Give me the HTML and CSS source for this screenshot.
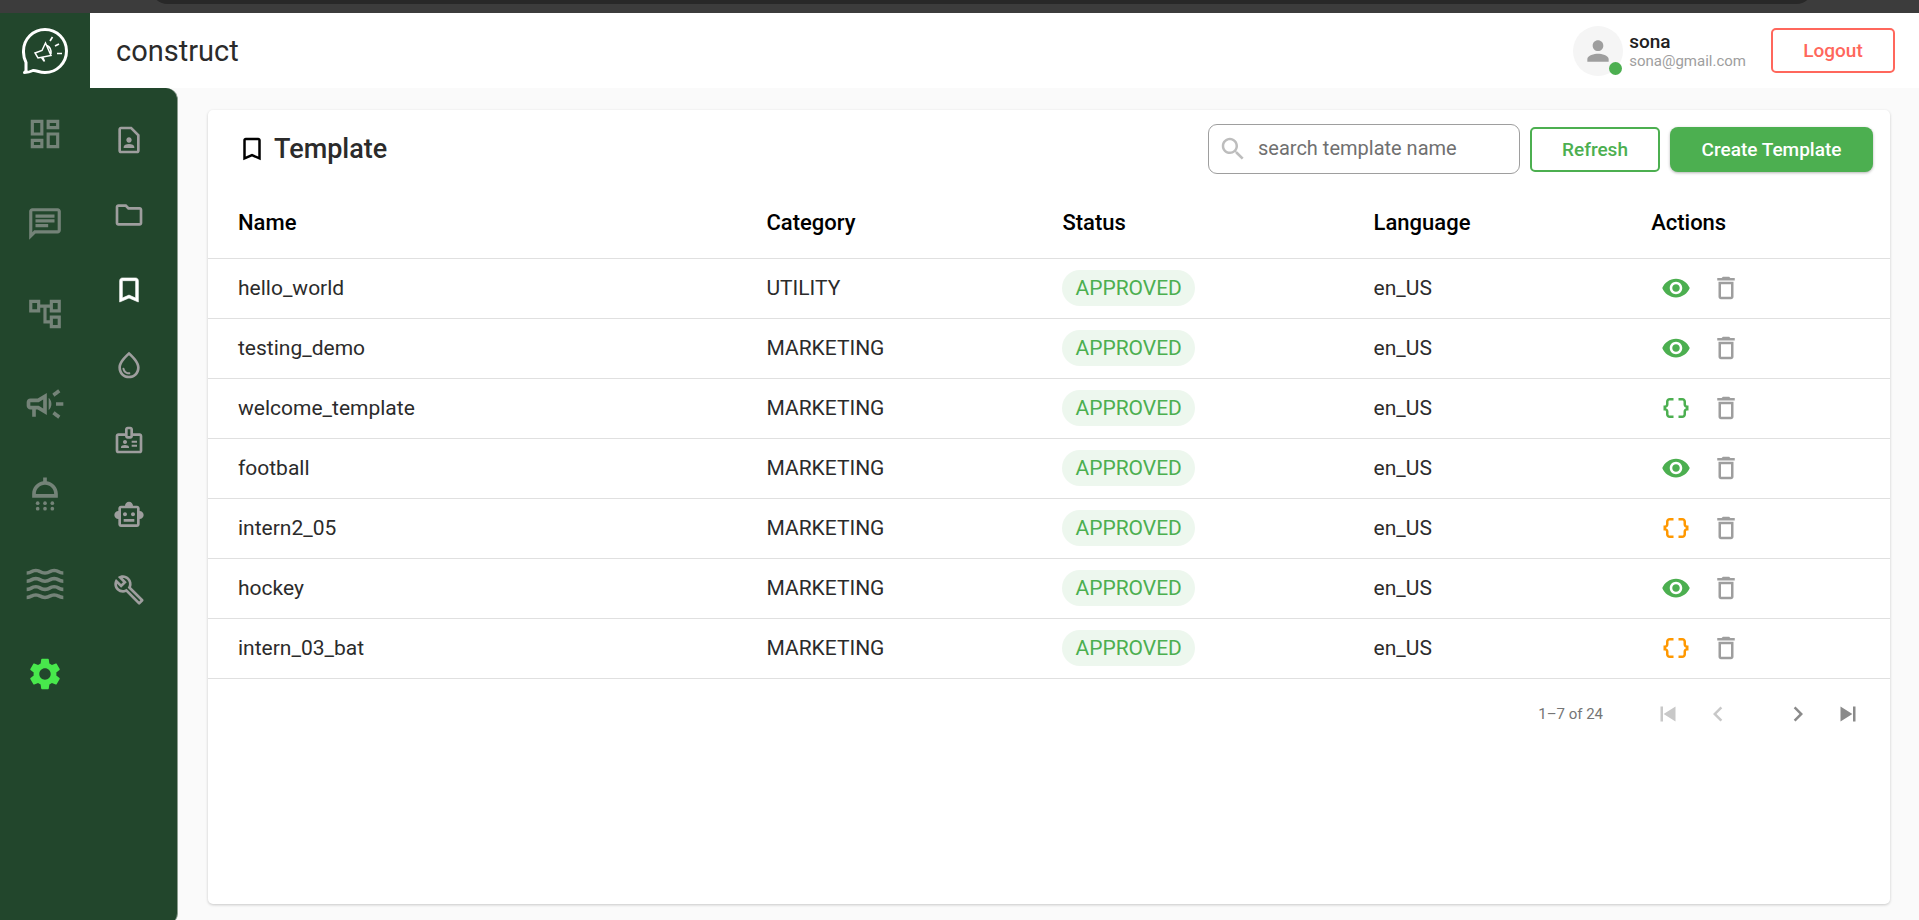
FILE: index.html
```
<!DOCTYPE html>
<html lang="en">
<head>
<meta charset="utf-8">
<title>construct - Template</title>
<link rel="stylesheet" href="styles.css">
</head>
<body>
<svg class="defs" aria-hidden="true">
  <symbol id="i-dashboard" viewBox="0 0 24 24"><path d="M19 5v2h-4V5h4M9 5v6H5V5h4m10 8v6h-4v-6h4M9 17v2H5v-2h4M21 3h-8v6h8V3zM11 3H3v10h8V3zm10 8h-8v10h8V11zm-10 4H3v6h8v-6z"/></symbol>
  <symbol id="i-chat" viewBox="0 0 24 24"><path d="M4 4h16v12H5.170L4 17.170V4m0-2c-1.100 0-1.990.9-1.990 2L2 22l4-4h14c1.100 0 2-.9 2-2V4c0-1.100-.9-2-2-2H4zm2 10h8v2H6v-2zm0-3h12v2H6V9zm0-3h12v2H6V6z"/></symbol>
  <symbol id="i-tree" viewBox="0 0 24 24"><path d="M22 11V3h-7v3H9V3H2v8h7V8h2v10h4v3h7v-8h-7v3h-2V8h2v3h7zM7 9H4V5h3v4zm10 6h3v4h-3v-4zm0-10h3v4h-3V5z"/></symbol>
  <symbol id="i-campaign" viewBox="0 0 24 24"><path d="M18 11v2h4v-2h-4zm-2 6.610c.96.71 2.210 1.650 3.200 2.390.4-.53.8-1.070 1.200-1.600-.99-.74-2.240-1.680-3.200-2.400-.4.54-.8 1.080-1.200 1.610zM20.400 5.600c-.4-.53-.8-1.070-1.200-1.600-.99.74-2.240 1.680-3.200 2.400.4.53.8 1.070 1.200 1.600.96-.72 2.210-1.650 3.200-2.400zM4 9c-1.100 0-2 .9-2 2v2c0 1.100.9 2 2 2h1v4h2v-4h1l5 3V6L8 9H4zm5.030 1.710L11 9.530v4.940l-1.970-1.180-.48-.29H4v-2h4.550l.48-.29zM15.500 12c0-1.330-.58-2.530-1.500-3.350v6.690c.92-.81 1.500-2.010 1.500-3.340z"/></symbol>
  <symbol id="i-shower" viewBox="0 0 24 24"><circle cx="8" cy="17" r="1"/><circle cx="12" cy="17" r="1"/><circle cx="16" cy="17" r="1"/><path d="M13 5.080V3h-2v2.080C7.610 5.570 5 8.470 5 12v2h14v-2c0-3.530-2.610-6.430-6-6.920zM7 12c0-2.760 2.240-5 5-5s5 2.240 5 5H7z"/><circle cx="8" cy="20" r="1"/><circle cx="12" cy="20" r="1"/><circle cx="16" cy="20" r="1"/></symbol>
  <symbol id="i-waves" viewBox="0 0 24 24"><g id="w"><path d="M17 16.990c-1.350 0-2.200.42-2.950.8-.65.33-1.180.6-2.050.6-.9 0-1.400-.25-2.050-.6-.75-.38-1.570-.8-2.950-.8s-2.200.42-2.950.8c-.65.33-1.170.6-2.050.6v1.950c1.350 0 2.200-.42 2.950-.8.65-.33 1.170-.6 2.050-.6s1.400.25 2.050.6c.75.38 1.570.8 2.950.8s2.200-.42 2.950-.8c.65-.33 1.180-.6 2.050-.6.9 0 1.400.25 2.050.6.75.38 1.580.8 2.950.8v-1.950c-.9 0-1.400-.25-2.050-.6-.75-.38-1.600-.8-2.950-.8z"/></g><use href="#w" y="-4.450"/><use href="#w" y="-8.900"/><use href="#w" y="-13.350"/></symbol>
  <symbol id="i-settings" viewBox="0 0 24 24"><path d="M19.140 12.940c.04-.3.06-.61.06-.94 0-.32-.02-.64-.07-.94l2.030-1.580c.18-.14.23-.41.12-.61l-1.920-3.320c-.12-.22-.37-.29-.59-.22l-2.390.96c-.5-.38-1.030-.7-1.620-.94l-.36-2.540c-.04-.24-.24-.41-.48-.41h-3.840c-.24 0-.43.17-.47.41l-.36 2.540c-.59.24-1.130.57-1.620.94l-2.390-.96c-.22-.08-.47 0-.59.22L2.740 8.870c-.12.21-.08.47.12.61l2.030 1.580c-.05.3-.09.63-.09.94s.02.64.07.94l-2.030 1.580c-.18.14-.23.41-.12.61l1.920 3.320c.12.22.37.29.59.22l2.390-.96c.5.38 1.030.7 1.620.94l.36 2.540c.05.24.24.41.48.41h3.840c.24 0 .44-.17.47-.41l.36-2.540c.59-.24 1.130-.56 1.620-.94l2.390.96c.22.08.47 0 .59-.22l1.920-3.320c.12-.22.07-.47-.12-.61l-2.010-1.580zM12 15.600c-1.980 0-3.600-1.620-3.600-3.600s1.620-3.600 3.600-3.600 3.600 1.620 3.600 3.600-1.620 3.600-3.600 3.600z"/></symbol>
  <symbol id="i-contact" viewBox="0 0 24 24"><path d="M13.170 4 18 8.830V20H6V4h7.170M14 2H6c-1.100 0-2 .9-2 2v16c0 1.100.9 2 2 2h12c1.100 0 2-.9 2-2V8l-6-6zm-2 12c1.100 0 2-.9 2-2s-.9-2-2-2-2 .9-2 2 .9 2 2 2zm4 3.430c0-.81-.48-1.530-1.220-1.850-.85-.37-1.790-.58-2.780-.58s-1.930.21-2.780.58C8.480 15.900 8 16.620 8 17.430V18h8v-.57z"/></symbol>
  <symbol id="i-folder" viewBox="0 0 24 24"><path d="m9.170 6 2 2H20v10H4V6h5.170M10 4H4c-1.100 0-1.990.9-1.990 2L2 18c0 1.100.9 2 2 2h16c1.100 0 2-.9 2-2V8c0-1.100-.9-2-2-2h-8l-2-2z"/></symbol>
  <symbol id="i-bookmark" viewBox="0 0 24 24"><path d="M17 3H7c-1.100 0-1.990.9-1.990 2L5 21l7-3 7 3V5c0-1.100-.9-2-2-2zm0 15-5-2.180L7 18V5h10v13z"/></symbol>
  <symbol id="i-drop" viewBox="0 0 24 24"><path d="M12 2c-5.330 4.550-8 8.480-8 11.800 0 4.980 3.800 8.200 8 8.200s8-3.220 8-8.200c0-3.320-2.670-7.250-8-11.800zm0 18c-3.350 0-6-2.570-6-6.200 0-2.340 1.950-5.440 6-9.140 4.050 3.700 6 6.790 6 9.140 0 3.630-2.650 6.200-6 6.200zm-4.170-6c.37 0 .67.26.74.62.41 2.220 2.280 2.980 3.640 2.870.43-.02.79.32.79.75 0 .4-.32.73-.72.75-2.130.13-4.620-1.090-5.190-4.120-.08-.45.28-.87.74-.87z"/></symbol>
  <symbol id="i-badge" viewBox="0 0 24 24"><path d="M20 7h-5V4c0-1.100-.9-2-2-2h-2c-1.100 0-2 .9-2 2v3H4c-1.100 0-2 .9-2 2v11c0 1.100.9 2 2 2h16c1.100 0 2-.9 2-2V9c0-1.100-.9-2-2-2zM11 4h2v5h-2V4zm9 16H4V9h5c0 1.100.9 2 2 2h2c1.100 0 2-.9 2-2h5v11zM9 15c.83 0 1.500-.67 1.500-1.500S9.830 12 9 12s-1.500.67-1.500 1.500S8.170 15 9 15zm2.080 1.180C10.440 15.900 9.740 15.750 9 15.750s-1.440.15-2.080.43c-.56.24-.92.78-.92 1.390V18h6v-.43c0-.61-.36-1.150-.92-1.390zM14 15.500h4V17h-4zM14 12.500h4V14h-4z"/></symbol>
  <symbol id="i-robot" viewBox="0 0 24 24"><path d="M20 9V7c0-1.100-.9-2-2-2h-3c0-1.660-1.340-3-3-3S9 3.340 9 5H6c-1.100 0-2 .9-2 2v2c-1.660 0-3 1.340-3 3s1.340 3 3 3v4c0 1.100.9 2 2 2h12c1.100 0 2-.9 2-2v-4c1.660 0 3-1.340 3-3s-1.340-3-3-3zm-2 10H6V7h12v12zm-9-6c-.83 0-1.500-.67-1.500-1.500S8.170 10 9 10s1.500.67 1.500 1.500S9.830 13 9 13zm7.500-1.500c0 .83-.67 1.500-1.500 1.500s-1.500-.67-1.500-1.500.67-1.500 1.500-1.500 1.500.67 1.500 1.500zM8 15h8v2H8v-2z"/></symbol>
  <symbol id="i-wrench" viewBox="0 0 24 24"><path d="m22.610 18.990-9.080-9.080c.93-2.340.45-5.100-1.440-7C9.790.61 6.210.4 3.660 2.260L7.500 6.110 6.080 7.520 2.250 3.690C.39 6.230.6 9.820 2.900 12.110c1.860 1.860 4.570 2.350 6.890 1.480l9.110 9.110c.39.39 1.020.39 1.410 0l2.300-2.300c.4-.38.4-1.010 0-1.410zm-3 1.600-9.460-9.460c-.61.45-1.290.72-2 .82-1.360.2-2.790-.21-3.830-1.250C3.370 9.760 2.930 8.500 3 7.260l3.090 3.090 4.240-4.240-3.090-3.090c1.240-.07 2.490.37 3.440 1.310 1.080 1.080 1.490 2.570 1.240 3.960-.12.71-.42 1.370-.88 1.960l9.450 9.450-.88.89z"/></symbol>
  <symbol id="i-person" viewBox="0 0 24 24"><path d="M12 12c2.210 0 4-1.790 4-4s-1.790-4-4-4-4 1.790-4 4 1.790 4 4 4zm0 2c-2.670 0-8 1.340-8 4v2h16v-2c0-2.660-5.330-4-8-4z"/></symbol>
  <symbol id="i-search" viewBox="0 0 24 24"><path d="M15.500 14h-.79l-.28-.27C15.410 12.590 16 11.110 16 9.500 16 5.910 13.090 3 9.500 3S3 5.910 3 9.500 5.910 16 9.500 16c1.610 0 3.090-.59 4.230-1.570l.27.28v.79l5 4.990L20.490 19l-4.990-5zm-6 0C7.010 14 5 11.990 5 9.500S7.010 5 9.500 5 14 7.010 14 9.500 11.990 14 9.500 14z"/></symbol>
  <symbol id="i-eye" viewBox="0 0 24 24"><path d="M12 4.500C7 4.500 2.730 7.610 1 12c1.730 4.390 6 7.500 11 7.500s9.270-3.110 11-7.500c-1.730-4.390-6-7.500-11-7.500zM12 17c-2.760 0-5-2.240-5-5s2.240-5 5-5 5 2.240 5 5-2.240 5-5 5zm0-8c-1.660 0-3 1.340-3 3s1.340 3 3 3 3-1.340 3-3-1.340-3-3-3z"/></symbol>
  <symbol id="i-braces" viewBox="0 0 24 24"><path d="M4 7v2c0 .55-.45 1-1 1H2v4h1c.55 0 1 .45 1 1v2c0 1.650 1.350 3 3 3h3v-2H7c-.55 0-1-.45-1-1v-2c0-1.300-.84-2.420-2-2.830v-.34C5.160 11.420 6 10.300 6 9V7c0-.55.45-1 1-1h3V4H7C5.350 4 4 5.350 4 7zM21 10c-.55 0-1-.45-1-1V7c0-1.650-1.350-3-3-3h-3v2h3c.55 0 1 .45 1 1v2c0 1.300.84 2.420 2 2.830v.34c-1.160.41-2 1.520-2 2.830v2c0 .55-.45 1-1 1h-3v2h3c1.650 0 3-1.350 3-3v-2c0-.55.45-1 1-1h1v-4h-1z"/></symbol>
  <symbol id="i-trash" viewBox="0 0 24 24"><path d="M6 19c0 1.100.9 2 2 2h8c1.100 0 2-.9 2-2V7H6v12zM8 9h8v10H8V9zm7.500-5-1-1h-5l-1 1H5v2h14V4h-3.500z"/></symbol>
  <symbol id="i-first" viewBox="0 0 24 24"><path d="M6 6h2v12H6zm2.500 6 9.500 6V6z"/></symbol>
  <symbol id="i-prev" viewBox="0 0 24 24"><path d="M15.410 7.410 14 6l-6 6 6 6 1.410-1.410L10.830 12z"/></symbol>
  <symbol id="i-next" viewBox="0 0 24 24"><path d="M10 6 8.590 7.410 13.170 12l-4.580 4.590L10 18l6-6z"/></symbol>
  <symbol id="i-last" viewBox="0 0 24 24"><path d="m6 18 9.500-6L6 6v12zM16 6v12h2V6h-2z"/></symbol>
</svg>

<div class="browser-bar"><div class="address-pill"></div></div>

<div class="app">
  <nav class="rail" aria-label="Main">
    <a class="logo" href="#" aria-label="Home">
      <svg viewBox="0 0 46 46" fill="none" stroke="#fff">
        <path stroke-width="3" stroke-linejoin="round" d="M2.500 44.500 4 43V34.500C1.500 30 1.400 27 1.500 23A21.500 21.500 0 1 1 23 44.500C17 44.500 14 42 11 42.500 8 44 5 44.500 2.500 44.500Z"/>
        <path stroke-width="1.500" d="m13 25 7-2.500L23.500 15 29 27.500 16 30ZM19.500 29.500 22 33 M25 17.500c3 1.500 4.500 4.500 4 8.500M21 29.500l1.500 4"/>
        <path stroke-width="1.700" d="m28 13 2.500-4M33 18l4-2M35 25.500h5"/>
      </svg>
    </a>
    <a href="#" aria-label="Dashboard"><svg><use href="#i-dashboard"/></svg></a>
    <a href="#" aria-label="Chat"><svg><use href="#i-chat"/></svg></a>
    <a href="#" aria-label="Flows"><svg><use href="#i-tree"/></svg></a>
    <a href="#" aria-label="Campaigns" class="large"><svg><use href="#i-campaign"/></svg></a>
    <a href="#" aria-label="Drip" class="large"><svg><use href="#i-shower"/></svg></a>
    <a href="#" aria-label="Streams" class="large"><svg><use href="#i-waves"/></svg></a>
    <a href="#" aria-label="Settings" class="active"><svg><use href="#i-settings"/></svg></a>
  </nav>

  <div class="main">
    <header class="header">
      <h1>construct</h1>
      <div class="user">
        <div class="avatar"><svg><use href="#i-person"/></svg><span class="online"></span></div>
        <div class="who"><strong>sona</strong><span>sona@gmail.com</span></div>
      </div>
      <button class="btn logout" type="button">Logout</button>
    </header>

    <div class="body">
      <nav class="subnav" aria-label="Settings">
        <a href="#" aria-label="Contacts"><svg><use href="#i-contact"/></svg></a>
        <a href="#" aria-label="Files"><svg><use href="#i-folder"/></svg></a>
        <a href="#" aria-label="Templates" class="active"><svg><use href="#i-bookmark"/></svg></a>
        <a href="#" aria-label="Theme"><svg><use href="#i-drop"/></svg></a>
        <a href="#" aria-label="Profile"><svg><use href="#i-badge"/></svg></a>
        <a href="#" aria-label="Bots"><svg><use href="#i-robot"/></svg></a>
        <a href="#" aria-label="Tools"><svg><use href="#i-wrench"/></svg></a>
      </nav>

      <main class="card">
        <div class="toolbar">
          <h2><svg><use href="#i-bookmark"/></svg>Template</h2>
          <label class="search"><svg><use href="#i-search"/></svg><input type="text" aria-label="Search template name" placeholder="search template name"></label>
          <button class="btn refresh" type="button">Refresh</button>
          <button class="btn create" type="button">Create Template</button>
        </div>
        <table>
          <thead>
            <tr><th class="c-name">Name</th><th class="c-category">Category</th><th class="c-status">Status</th><th class="c-language">Language</th><th>Actions</th></tr>
          </thead>
          <tbody>
            <tr><td>hello_world</td><td>UTILITY</td><td><span class="chip">APPROVED</span></td><td>en_US</td><td><div class="actions"><button class="green" aria-label="View"><svg><use href="#i-eye"/></svg></button><button aria-label="Delete"><svg><use href="#i-trash"/></svg></button></div></td></tr>
            <tr><td>testing_demo</td><td>MARKETING</td><td><span class="chip">APPROVED</span></td><td>en_US</td><td><div class="actions"><button class="green" aria-label="View"><svg><use href="#i-eye"/></svg></button><button aria-label="Delete"><svg><use href="#i-trash"/></svg></button></div></td></tr>
            <tr><td>welcome_template</td><td>MARKETING</td><td><span class="chip">APPROVED</span></td><td>en_US</td><td><div class="actions"><button class="green" aria-label="Variables"><svg><use href="#i-braces"/></svg></button><button aria-label="Delete"><svg><use href="#i-trash"/></svg></button></div></td></tr>
            <tr><td>football</td><td>MARKETING</td><td><span class="chip">APPROVED</span></td><td>en_US</td><td><div class="actions"><button class="green" aria-label="View"><svg><use href="#i-eye"/></svg></button><button aria-label="Delete"><svg><use href="#i-trash"/></svg></button></div></td></tr>
            <tr><td>intern2_05</td><td>MARKETING</td><td><span class="chip">APPROVED</span></td><td>en_US</td><td><div class="actions"><button class="orange" aria-label="Variables"><svg><use href="#i-braces"/></svg></button><button aria-label="Delete"><svg><use href="#i-trash"/></svg></button></div></td></tr>
            <tr><td>hockey</td><td>MARKETING</td><td><span class="chip">APPROVED</span></td><td>en_US</td><td><div class="actions"><button class="green" aria-label="View"><svg><use href="#i-eye"/></svg></button><button aria-label="Delete"><svg><use href="#i-trash"/></svg></button></div></td></tr>
            <tr><td>intern_03_bat</td><td>MARKETING</td><td><span class="chip">APPROVED</span></td><td>en_US</td><td><div class="actions"><button class="orange" aria-label="Variables"><svg><use href="#i-braces"/></svg></button><button aria-label="Delete"><svg><use href="#i-trash"/></svg></button></div></td></tr>
          </tbody>
        </table>
        <div class="pager">
          <span class="range">1–7 of 24</span>
          <button aria-label="First page" disabled><svg><use href="#i-first"/></svg></button>
          <button aria-label="Previous page" disabled><svg><use href="#i-prev"/></svg></button>
          <button class="next" aria-label="Next page"><svg><use href="#i-next"/></svg></button>
          <button aria-label="Last page"><svg><use href="#i-last"/></svg></button>
        </div>
      </main>
    </div>
  </div>
</div>
</body>
</html>
```

FILE: styles.css
```
* { box-sizing: border-box; }

body {
  margin: 0;
  height: 100vh;
  display: flex;
  flex-direction: column;
  overflow: hidden;
  background: #fafafa;
  color: #2b2b2b;
  font-family: Roboto, "Liberation Sans", sans-serif;
}

h1, h2 { margin: 0; }
svg { display: block; fill: currentColor; flex: none; }
.defs { position: absolute; width: 0; height: 0; }
button { font-family: inherit; cursor: pointer; }

/* Browser strip above the app */
.browser-bar {
  flex: none;
  display: flex;
  align-items: flex-end;
  height: 13px;
  padding: 0 105px 9px 150px;
  overflow: hidden;
  background: #3c3c3c;
}
.address-pill {
  flex: 1;
  height: 36px;
  border-radius: 18px;
  background: #282828;
}

.app { flex: 1; display: flex; min-height: 0; }

/* Icon rail */
.rail {
  flex: none;
  width: 90px;
  display: flex;
  flex-direction: column;
  background: #22462c;
}
.rail a {
  display: flex;
  align-items: center;
  justify-content: center;
  height: 90px;
  color: #748378;
}
.rail svg { width: 38px; height: 38px; }
.rail .large svg { width: 44px; height: 44px; }
.rail .active { color: #48e84c; }
.rail .logo { height: 76px; }
.rail .logo svg { width: 46px; height: 46px; fill: none; }

.main { flex: 1; min-width: 0; display: flex; flex-direction: column; }

/* Header */
.header {
  flex: none;
  display: flex;
  align-items: center;
  height: 75px;
  padding: 0 24px 0 26px;
  background: #fff;
}
.header h1 { flex: 1; font-size: 29px; font-weight: 400; line-height: 36px; }
.user { display: flex; align-items: center; gap: 6px; margin-right: 25px; }
.avatar {
  position: relative;
  display: flex;
  align-items: center;
  justify-content: center;
  width: 50px;
  height: 50px;
  border-radius: 50%;
  background: #f5f5f5;
  color: #9e9e9e;
}
.avatar svg { width: 32px; height: 32px; }
.online {
  position: absolute;
  right: 1px;
  bottom: 1px;
  width: 13px;
  height: 13px;
  border-radius: 50%;
  background: #4caf50;
}
.who { display: flex; flex-direction: column; }
.who strong { font-size: 19px; font-weight: 500; line-height: 20px; color: #212121; }
.who span { font-size: 15px; line-height: 18px; color: #9e9e9e; }

.btn {
  height: 45px;
  padding: 0;
  border: 2px solid;
  border-radius: 5px;
  background: #fff;
  font-size: 19px;
  font-weight: 500;
}
.logout { width: 124px; color: #ff675c; }
.refresh { width: 130px; color: #4caf50; }
.create {
  width: 203px;
  border: 0;
  border-radius: 8px;
  background: #4caf50;
  color: #fff;
  box-shadow: 0 1px 3px rgba(0, 0, 0, .3);
}

/* Page body */
.body { flex: 1; display: flex; min-height: 0; }
.subnav {
  flex: none;
  width: 88px;
  margin-bottom: -5px;
  padding: 14px 10px 0 0;
  border-right: 1px solid #8b9c8f;
  border-radius: 0 12px 12px 0;
  background: #22462c;
}
.subnav a {
  display: flex;
  align-items: center;
  justify-content: center;
  height: 75px;
  color: #9e9e9e;
}
.subnav svg { width: 32px; height: 32px; }
.subnav .active { color: #fff; }
.subnav .active svg { stroke: currentColor; stroke-width: .5px; }

.card {
  flex: 1;
  min-width: 0;
  margin: 22px 29px 16px 30px;
  border-radius: 5px;
  background: #fff;
  box-shadow: 0 1px 3px rgba(0, 0, 0, .2);
}
.toolbar {
  display: flex;
  align-items: center;
  gap: 10px;
  height: 78px;
  padding: 0 17px 0 29px;
}
.toolbar h2 {
  flex: 1;
  display: flex;
  align-items: center;
  gap: 7px;
  font-size: 27px;
  font-weight: 500;
}
.toolbar h2 svg { width: 30px; height: 30px; color: #000; }
.search {
  display: flex;
  align-items: center;
  gap: 10px;
  width: 312px;
  height: 50px;
  padding: 0 9px;
  border: 1px solid #9e9e9e;
  border-radius: 9px;
}
.search svg { width: 30px; height: 30px; color: #bdbdbd; }
.search input {
  flex: 1;
  min-width: 0;
  padding: 0 0 2px;
  border: 0;
  outline: 0;
  background: none;
  font: 400 20px/24px Roboto, "Liberation Sans", sans-serif;
}
.search input::placeholder { color: #707070; opacity: 1; }

/* Template table */
table { width: 100%; table-layout: fixed; border-collapse: collapse; }
th, td { padding: 0; border-bottom: 1px solid #e0e0e0; text-align: left; }
th { height: 70px; font-size: 22px; font-weight: 500; color: #000; }
td { height: 60px; font-size: 21px; }
th:first-child, td:first-child { padding-left: 30px; }
.c-name { width: 33.200%; }
.c-category { width: 17.600%; }
.c-status { width: 18.500%; }
.c-language { width: 16.500%; }
.chip {
  display: inline-block;
  padding: 0 13px;
  border-radius: 18px;
  background: #edf7ee;
  color: #4caf50;
  line-height: 36px;
}
.actions { display: flex; }
.actions button, .pager button {
  display: flex;
  align-items: center;
  justify-content: center;
  width: 50px;
  height: 50px;
  padding: 0;
  border: 0;
  background: none;
  color: #9e9e9e;
}
.actions svg, .pager svg { width: 30px; height: 30px; }
.actions .green { color: #4caf50; }
.actions .orange { color: #ff9800; }

.pager {
  display: flex;
  align-items: center;
  justify-content: flex-end;
  height: 70px;
  padding-right: 17px;
}
.range { margin-right: 40px; font-size: 15px; color: #757575; }
.pager button { color: #8a8a8a; }
.pager button:disabled { color: #c8c8c8; }
.pager .next { margin-left: 30px; }
```
